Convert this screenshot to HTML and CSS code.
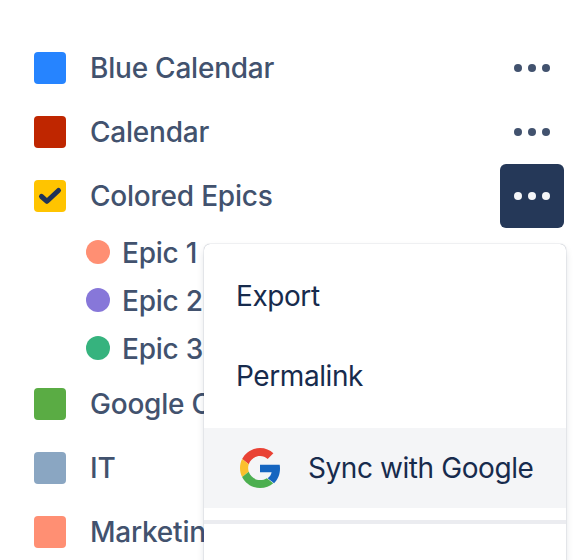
FILE: index.html
```html
<!DOCTYPE html>
<html lang="en">
<head>
<meta charset="utf-8">
<title>Calendars</title>
<link rel="stylesheet" href="styles.css">
</head>
<body>
<div class="page">
  <ul class="list">
    <li class="row">
      <span class="swatch blue"></span><span class="name">Blue Calendar</span>
      <button class="more" type="button" aria-label="More"><i></i><i></i><i></i></button>
    </li>
    <li class="row">
      <span class="swatch red"></span><span class="name">Calendar</span>
      <button class="more" type="button" aria-label="More"><i></i><i></i><i></i></button>
    </li>
    <li class="row">
      <span class="swatch yellow">
        <svg class="check" viewBox="0 0 32 32" aria-hidden="true"><path d="M7.500 16.500l5.500 4.800L24.500 10.500" fill="none" stroke="#1F3358" stroke-width="5" stroke-linecap="round" stroke-linejoin="round"/></svg>
      </span><span class="name">Colored Epics</span>
      <button class="more active" type="button" aria-label="More"><i></i><i></i><i></i></button>
    </li>
    <li class="sub"><span class="dot coral"></span><span class="name">Epic 1</span></li>
    <li class="sub"><span class="dot purple"></span><span class="name">Epic 2</span></li>
    <li class="sub"><span class="dot teal"></span><span class="name">Epic 3</span></li>
    <li class="row"><span class="swatch green"></span><span class="name">Google Calendar</span></li>
    <li class="row"><span class="swatch slate"></span><span class="name">IT</span></li>
    <li class="row"><span class="swatch salmon"></span><span class="name">Marketing</span></li>
  </ul>
  <div class="menu">
    <div class="group">
      <div class="item">Export</div>
      <div class="item">Permalink</div>
      <div class="item hover">
        <svg class="g" viewBox="0 0 48 48" aria-hidden="true">
          <path fill="#E94235" d="M24 9.500c3.540 0 6.710 1.220 9.210 3.600l6.850-6.850C35.900 2.380 30.470 0 24 0 14.620 0 6.510 5.380 2.560 13.220l7.980 6.190C12.430 13.720 17.740 9.500 24 9.500z"/>
          <path fill="#1565C0" d="M48 24.550c0-1.570-.15-3.090-.38-4.550H24v9.020h13.940c-.58 2.960-2.260 5.480-4.780 7.180l7.730 6C45.400 38.020 48 31.840 48 24.550z"/>
          <path fill="#FBC02D" d="M10.530 28.590c-.48-1.450-.76-2.990-.76-4.590s.27-3.140.76-4.590l-7.980-6.190C.92 16.460 0 20.120 0 24c0 3.880.92 7.540 2.560 10.780l7.970-6.190z"/>
          <path fill="#4CAF50" d="M24 48c6.480 0 11.930-2.130 15.890-5.810l-7.730-6c-2.150 1.450-4.920 2.300-8.160 2.300-6.260 0-11.570-4.220-13.470-9.910l-7.980 6.190C6.510 42.620 14.620 48 24 48z"/>
        </svg>
        <span>Sync with Google</span>
      </div>
    </div>
    <div class="group rest"></div>
  </div>
</div>
</body>
</html>
```
FILE: styles.css
```css
* { box-sizing: border-box; }
html, body { margin: 0; height: 560px; overflow: hidden; background: #fff; }
.page {
  position: relative;
  width: 576px;
  height: 560px;
  overflow: hidden;
  font-family: Inter, "Liberation Sans", sans-serif;
}
.list { list-style: none; margin: 0; padding: 36px 12px 0 34px; }
.row { display: flex; align-items: center; height: 64px; }
.sub { display: flex; align-items: center; height: 48px; padding: 1px 0 0 52px; }
.sub .dot { margin-top: -1px; }
.name { font-size: 28px; font-weight: 550; letter-spacing: -0.22px; color: #42526E; line-height: 1; white-space: nowrap; }
.swatch { width: 32px; height: 32px; border-radius: 4px; margin-right: 24px; flex: none; display: block; }
.dot { width: 24px; height: 24px; border-radius: 50%; margin-right: 12px; flex: none; }
.blue { background: #2684FF; }
.red { background: #BF2600; }
.yellow { background: #FFC400; }
.green { background: #5AAC44; }
.slate { background: #8AA6C2; }
.salmon { background: #FF8F73; }
.coral { background: #FF8F73; }
.purple { background: #8777D9; }
.teal { background: #36B37E; }
.check { display: block; width: 32px; height: 32px; }
.more {
  margin-left: auto;
  width: 64px;
  height: 64px;
  padding: 0;
  border: 0;
  border-radius: 6px;
  background: transparent;
  display: flex;
  align-items: center;
  justify-content: center;
  gap: 6px;
}
.more i { display: block; width: 8px; height: 8px; border-radius: 50%; background: #42526E; }
.more.active { background: #253858; }
.more.active i { background: #F4F5F7; }
.menu {
  position: absolute;
  left: 204px;
  top: 244px;
  width: 362px;
  background: #fff;
  border-radius: 6px;
  box-shadow: 0 0 1px rgba(9, 30, 66, .5), 0 4px 8px -2px rgba(9, 30, 66, .22);
}
.group { padding: 12px 0; }
.group + .group { border-top: 4px solid #EBECF0; }
.rest { height: 200px; }
.item {
  display: flex;
  align-items: center;
  height: 80px;
  padding: 0 32px;
  font-size: 28px;
  font-weight: 400;
  letter-spacing: -0.42px;
  color: #172B4D;
  white-space: nowrap;
}
.item.hover { background: #F4F5F7; margin-top: 12px; padding-left: 36px; }
.g { width: 40px; height: 40px; margin-right: 28px; flex: none; }
```
